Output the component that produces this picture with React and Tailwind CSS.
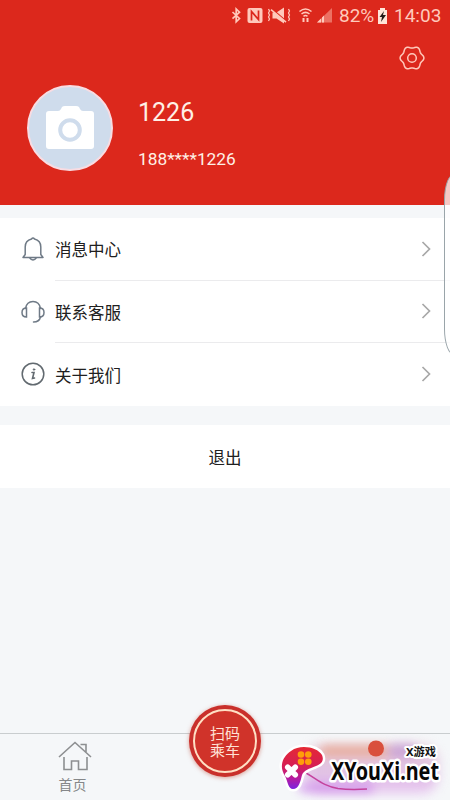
import React from "react";

const gearPath =
  Array.from({ length: 72 }, (_, i) => {
    const a = (i * Math.PI) / 36;
    const r = 10.9 + 1.0 * Math.cos(6 * a);
    return `${i ? "L" : "M"}${(13 + r * Math.cos(a)).toFixed(2)} ${(13 + r * Math.sin(a)).toFixed(2)}`;
  }).join(" ") + "Z";

function StatusBar() {
  return (
    <div className="flex h-8 items-center pl-[230px] text-[#ffc9bb]">
      <svg width="108" height="20" viewBox="230 6 108 20" fill="none" stroke="currentColor" className="shrink-0">
        <path d="M232.500 12l7 6.500-3.300 3.300V9l3.300 3.200-7 6.500" strokeWidth="1.700" />
        <rect x="247.500" y="8" width="15" height="15" rx="2" fill="currentColor" stroke="none" />
        <path d="M251.500 20.500v-9l7 8V10.500" stroke="#dc281c" strokeWidth="1.700" />
        <path d="M272.500 12.500h4l7.500-5v16l-7.500-5h-4z" fill="currentColor" stroke="none" />
        <path d="M271.500 8.500l14 12" stroke="#dc281c" strokeWidth="1.500" />
        <path d="M271 9.700l15 12.500" strokeWidth="1.500" />
        <path d="M268.500 9l1 2-1 2 1 2-1 2 1 2-1 2M288.500 9l1 2-1 2 1 2-1 2 1 2-1 2" strokeWidth="1.200" />
        <path d="M299.500 11.500q6-5 12 0M301.500 14q4-3.200 8 0M303.500 16.300q2-1.500 4 0" strokeWidth="1.600" />
        <path d="M303.500 18v4M307.500 18v4" strokeWidth="2" />
        <path d="M317 22.500L332 8v14.500z" fill="currentColor" stroke="none" opacity=".45" />
        <path d="M317 22.500l4-4v4z M322 22.500v-5l2-2v7z" fill="currentColor" stroke="none" />
      </svg>
      <span className="w-[39px] whitespace-nowrap pl-px text-[19px] leading-8">82%</span>
      <svg width="11" height="17" viewBox="0 0 11 17" className="shrink-0">
        <path d="M3 2V0h5v2h2v14H1V2z" fill="#ffe5d8" />
        <path d="M7 3L2.500 9H5l-1 5 5-7H6z" fill="#241b18" />
      </svg>
      <span className="ml-[6px] whitespace-nowrap text-[19px] leading-8">14:03</span>
    </div>
  );
}

function BellIcon() {
  return (
    <svg width="24" height="26" viewBox="0 0 24 26" fill="none" stroke="#6f7a86" strokeWidth="1.500" strokeLinejoin="round">
      <path d="M2 21.500l2.200-3V11C4.200 6.500 7 3.800 10.500 3q1.500-2.200 3 0C17 3.800 19.800 6.500 19.800 11v7.500l2.200 3z" />
      <path d="M8.500 21.500q3.500 5 7 0" />
    </svg>
  );
}

function HeadsetIcon() {
  return (
    <svg width="24" height="26" viewBox="0 0 24 26" fill="none" stroke="#6f7a86" strokeWidth="1.500" strokeLinecap="round">
      <path d="M4.500 9.500C5.300 5 8 2.500 12 2.500s6.700 2.500 7.500 7" />
      <path d="M5.500 9C2.500 9 1 11 1 13.500S2.500 18 5.500 18zM18.500 9c3 0 4.500 2 4.500 4.500S21.500 18 18.500 18z" />
      <path d="M19.500 18c-.7 3-3.500 5-7 5" />
    </svg>
  );
}

function InfoIcon() {
  return (
    <svg width="24" height="26" viewBox="0 0 24 26" fill="none" stroke="#626a70" strokeLinecap="round">
      <circle cx="12" cy="13" r="10.800" strokeWidth="1.500" />
      <path d="M11 11.500h2l-1.500 6 2-.5" strokeWidth="1.600" />
      <circle cx="13" cy="8.500" r=".8" fill="#626a70" strokeWidth=".8" />
    </svg>
  );
}

function MenuRow({ icon, label, last }) {
  return (
    <div className="flex h-[62.500px] pl-[21px]">
      <div className="flex w-[34px] shrink-0 items-center">{icon}</div>
      <div className={`flex flex-1 items-center justify-between pr-[18px] ${last ? "" : "border-b border-[#ebebed]"}`}>
        <span className="pt-[6px] text-[16.500px] text-[#202020]">{label}</span>
        <svg width="12" height="18" viewBox="0 0 12 18" fill="none" stroke="#a8a8a8" strokeWidth="1.700">
          <path d="M2.500 2l7 7-7 7" />
        </svg>
      </div>
    </div>
  );
}

function Watermark() {
  return (
    <div className="absolute bottom-0 right-0 h-[66px] w-[180px]">
      <div className="absolute left-[34px] top-[11px] h-[48px] w-[134px] rounded-2xl bg-gradient-to-b from-[#e6c3d0] via-[#dcb6de] to-[#e3b4ee] opacity-80 blur-[6px]" />
      <div className="absolute left-[50px] top-[11px] h-[12px] w-[70px] rounded-full bg-[#e8a58e] opacity-75 blur-[5px]" />
      <div className="absolute left-[118px] top-[10px] h-[14px] w-[30px] rounded-full bg-[#b98bd0] opacity-60 blur-[5px]" />
      <div className="absolute left-[28px] top-[49px] h-[10px] w-[76px] rounded-full bg-[#c36ee8] opacity-50 blur-[5px]" />
      <svg className="absolute inset-0" width="180" height="66" viewBox="270 734 180 66">
        <defs>
          <linearGradient id="pad" x1="0" y1="0" x2="0" y2="1">
            <stop offset="0" stopColor="#e52834" />
            <stop offset=".48" stopColor="#d51e57" />
            <stop offset=".75" stopColor="#b51ba1" />
            <stop offset="1" stopColor="#7c22e0" />
          </linearGradient>
        </defs>
        <circle cx="376" cy="748.500" r="8" fill="#d9503c" />
        <path d="M306 773c11 6 17 13 32 15.500 8 1 20 1 29 .5" fill="none" stroke="#c4439e" strokeWidth="1.500" />
        <path
          d="M291 751c4-3 8-4 13-4 8 0 15 3 18 8 2.500 6-1 9-6 11-7 3-12 4-14 9-1.500 6-3 14-9 14-5 0-5-7-8-13-6-9-3-19 6-25z"
          fill="url(#pad)" stroke="#fff" strokeWidth="5" paintOrder="stroke" strokeLinejoin="round"
        />
        <g fill="#ff9d0a">
          <circle cx="301" cy="754.500" r="3.300" />
          <circle cx="308.300" cy="754.500" r="3.300" />
          <circle cx="301" cy="761.700" r="3.300" />
          <circle cx="308.300" cy="761.700" r="3.300" />
        </g>
        <path d="M287.700 767.200l7.600 7.600M295.300 767.200l-7.600 7.600" stroke="#fff" strokeWidth="5.500" strokeLinecap="round" />
        <text x="406" y="756" textLength="30" lengthAdjust="spacingAndGlyphs" fontSize="11" fontWeight="700" fill="#111" stroke="#fff" strokeWidth="4" strokeLinejoin="round" paintOrder="stroke" className="font-['Noto_Sans','Noto_Sans_CJK_SC',sans-serif]">X游戏</text>
        <text x="331" y="780" textLength="108" lengthAdjust="spacingAndGlyphs" fontSize="25" fontWeight="700" fill="#080808" stroke="#fff" strokeWidth="5" strokeLinejoin="round" paintOrder="stroke" className="font-['Noto_Sans',sans-serif]">XYouXi.net</text>
      </svg>
    </div>
  );
}

export default function App() {
  return (
    <div className="relative flex h-[800px] w-[450px] flex-col overflow-hidden bg-[#f5f7f9] font-[Roboto,'Noto_Sans_CJK_SC',sans-serif]">
      <header className="h-[205px] shrink-0 bg-[#dc281c]">
        <StatusBar />
        <div className="flex h-[53px] justify-end pr-[25px] pt-[13px]">
          <svg width="26" height="26" viewBox="0 0 26 26" fill="none" stroke="#ffc9bb" strokeWidth="1.500">
            <path d={gearPath} />
            <circle cx="13" cy="13" r="4.300" />
          </svg>
        </div>
        <div className="flex pl-[27px]">
          <div className="flex size-[86px] items-center justify-center rounded-full border-2 border-[#f8dce2] bg-[#cfdcec]">
            <svg width="50" height="46" viewBox="0 0 50 46">
              <path d="M4 6h9q2 0 3-2l1-2q1-1 3-1h11q2 0 3 1l1 2q1 2 3 2h8q3 0 3 3v32q0 3-3 3H4q-3 0-3-3V9q0-3 3-3z" fill="#fff" />
              <circle cx="25" cy="25" r="9.800" fill="none" stroke="#cfdcec" strokeWidth="4" />
            </svg>
          </div>
          <div className="ml-[25px] flex flex-col pt-[12px] text-[#fff0e6]">
            <span className="text-[25px] leading-8">1226</span>
            <span className="mt-[18px] text-[17.300px] leading-6">188****1226</span>
          </div>
        </div>
      </header>

      <main className="flex flex-1 flex-col">
        <section className="mt-[13px] bg-white">
          <MenuRow icon={<BellIcon />} label="消息中心" />
          <MenuRow icon={<HeadsetIcon />} label="联系客服" />
          <MenuRow icon={<InfoIcon />} label="关于我们" last />
        </section>
        <button className="mt-[19.500px] flex h-[63px] items-center justify-center bg-white pt-[5px] text-[16.500px] text-[#202020]">退出</button>
      </main>

      <nav className="flex h-[67px] shrink-0 border-t border-[#c9cdcf]">
        <div className="flex w-[145px] flex-col items-center pt-[7px]">
          <svg width="34" height="33" viewBox="0 0 34 33" fill="none" stroke="#8d8f91" strokeWidth="1.600" className="ml-[5px]">
            <path d="M1 16L17 1.500l16 14.500M22.500 3.500H28v8M6 16v12.500h7.500V20h7v8.500H29V16" />
          </svg>
          <span className="mt-[1px] text-[14px] leading-5 text-[#858789]">首页</span>
        </div>
        <div className="relative w-[160px]">
          <div className="absolute -top-[29px] left-[44px] flex size-[72px] items-center justify-center rounded-full bg-[#c9302b] p-1 shadow-[0_1px_4px_rgba(190,70,50,0.5)]">
            <div className="flex size-full flex-col items-center justify-center rounded-full border-2 border-[#ffdfc4] bg-[#d0332a] pt-[4px] text-[15px] leading-[17px] text-[#ffe2d6]">
              <span>扫码</span>
              <span>乘车</span>
            </div>
          </div>
        </div>
      </nav>

      <div className="absolute right-0 top-[174px] h-[181px] w-[6px] overflow-hidden">
        <div className="h-full w-[20px] rounded-[10px/26px] border border-[#9aa5aa] bg-white/75" />
      </div>
      <Watermark />
    </div>
  );
}
